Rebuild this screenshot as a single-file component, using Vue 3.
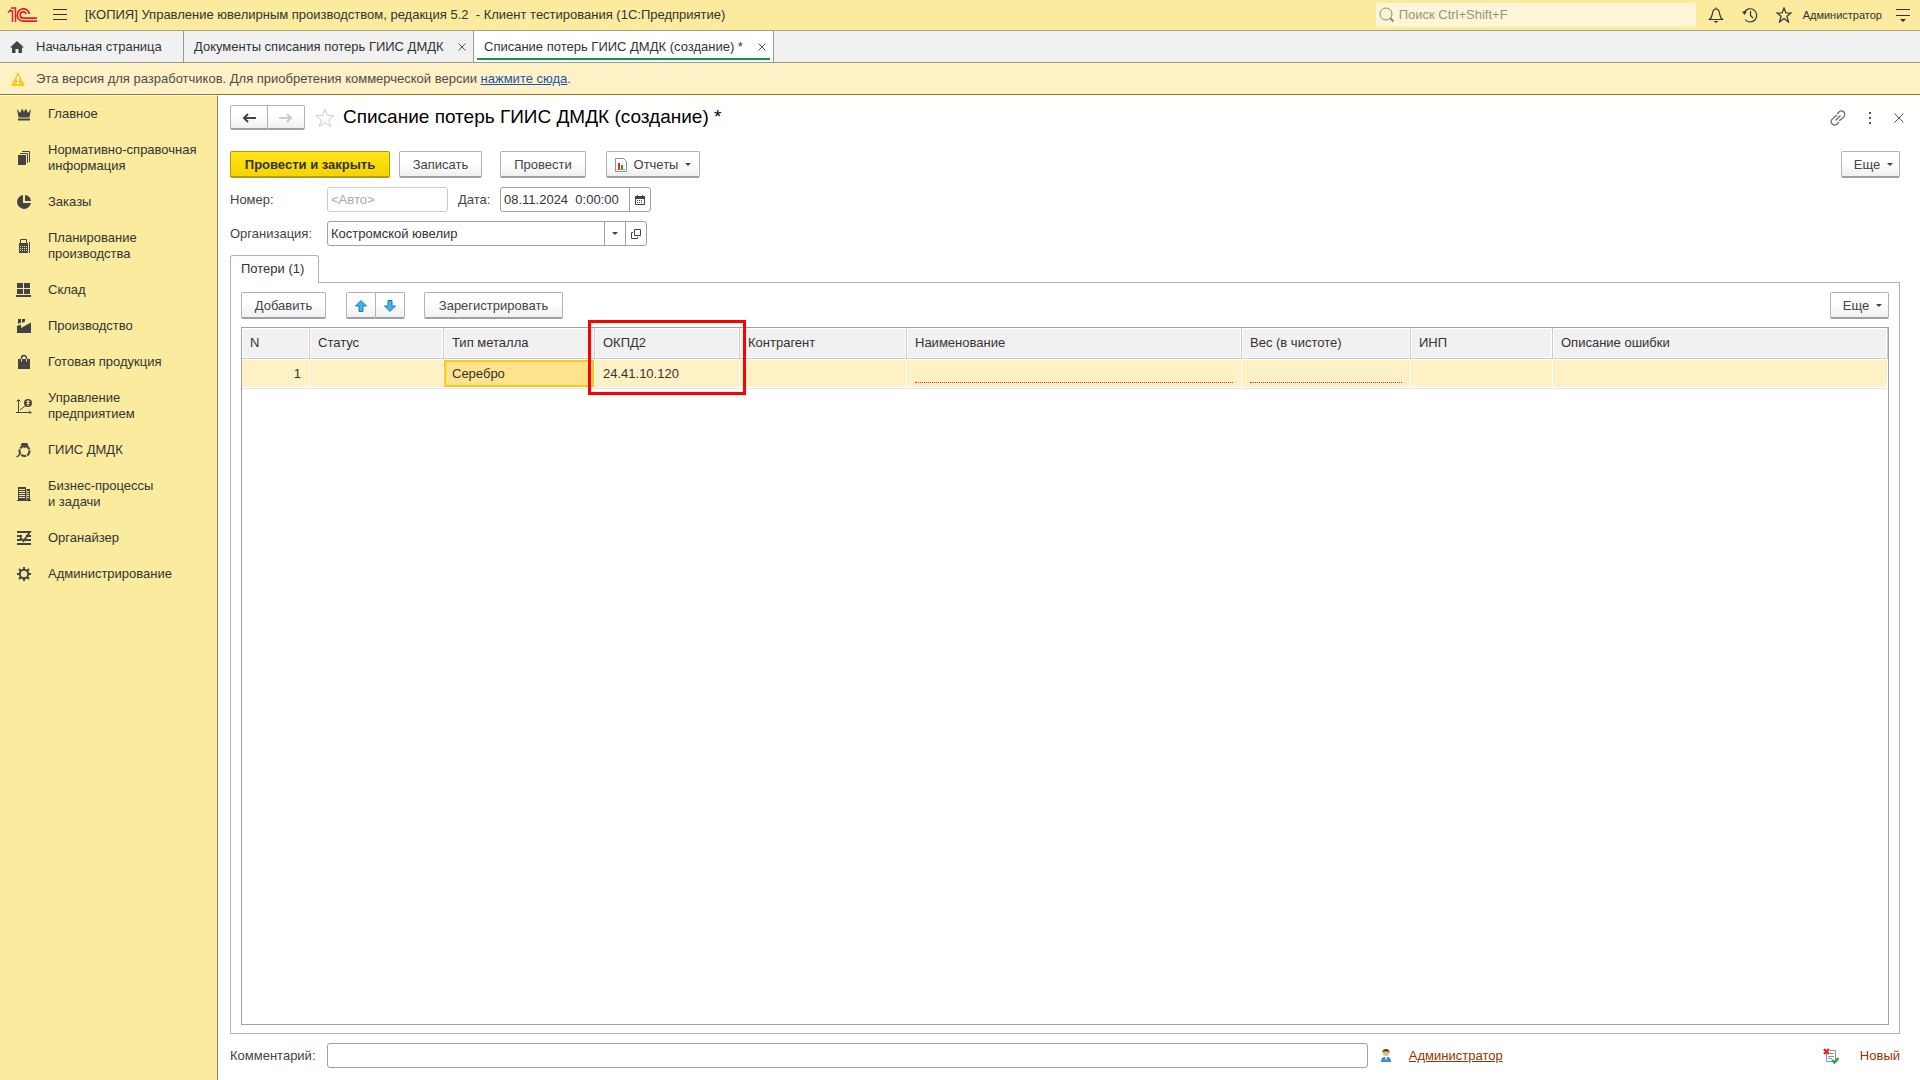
<script setup>
import { ref } from 'vue'

const menu = [
  { icon: 'crown', lines: ['Главное'] },
  { icon: 'docs', lines: ['Нормативно-справочная', 'информация'] },
  { icon: 'pie', lines: ['Заказы'] },
  { icon: 'calc', lines: ['Планирование', 'производства'] },
  { icon: 'stock', lines: ['Склад'] },
  { icon: 'factory', lines: ['Производство'] },
  { icon: 'bag', lines: ['Готовая продукция'] },
  { icon: 'chart', lines: ['Управление', 'предприятием'] },
  { icon: 'ring', lines: ['ГИИС ДМДК'] },
  { icon: 'building', lines: ['Бизнес-процессы', 'и задачи'] },
  { icon: 'organizer', lines: ['Органайзер'] },
  { icon: 'gear', lines: ['Администрирование'] },
]

const columns = [
  { key: 'n', title: 'N' },
  { key: 'status', title: 'Статус' },
  { key: 'metal', title: 'Тип металла' },
  { key: 'okpd', title: 'ОКПД2' },
  { key: 'partner', title: 'Контрагент' },
  { key: 'name', title: 'Наименование', required: true },
  { key: 'weight', title: 'Вес (в чистоте)', required: true },
  { key: 'inp', title: 'ИНП' },
  { key: 'error', title: 'Описание ошибки' },
]

const rows = [{ n: '1', metal: 'Серебро', okpd: '24.41.10.120' }]

const appTitle = '[КОПИЯ] Управление ювелирным производством, редакция 5.2  - Клиент тестирования (1С:Предприятие)'
const date = ref('08.11.2024  0:00:00')
const organization = ref('Костромской ювелир')
const comment = ref('')
</script>

<template>
  <div class="app">
    <header class="topbar">
      <svg class="logo" width="30" height="16" viewBox="0 0 30 16" fill="none" stroke="#e01f26" stroke-width="2">
        <path d="M0 5.500L3 2.500M2 4h2.500v11M3 1h4.500v14" stroke-width="1.500" />
        <path d="M21.500 7A6.200 6.200 0 1 0 15 14.200H29" stroke-width="1.700" />
        <path d="M18.400 7A3.200 3.200 0 1 0 15 11.200H29" stroke-width="1.700" />
      </svg>
      <button class="icon-btn burger" aria-label="Меню">
        <svg width="14" height="12" viewBox="0 0 14 12" stroke="#333" fill="none"><path d="M0 .5h14M0 5.500h14M0 10.500h14" /></svg>
      </button>
      <span class="app-title">{{ appTitle }}</span>
      <label class="search">
        <svg width="16" height="16" viewBox="0 0 16 16" fill="none" stroke="#8f8a68"><circle cx="7" cy="7" r="6" /><path d="M11 11l3.500 3.500" stroke-width="2" /></svg>
        <input type="search" placeholder="Поиск Ctrl+Shift+F" aria-label="Поиск" />
      </label>
      <button class="icon-btn" aria-label="Уведомления">
        <svg width="16" height="16" viewBox="0 0 16 16" fill="none" stroke="#333" stroke-width="1.200"><path d="M8 .5v1.500M1.500 12.500c2.500-2 2.500-3.500 3-6.500C5 3.500 6 2 8 2s3 1.500 3.500 4c.5 3 .5 4.500 3 6.500z" /><path d="M5.500 14h5L8 16z" fill="#333" stroke="none" /></svg>
      </button>
      <button class="icon-btn" aria-label="История">
        <svg width="16" height="16" viewBox="0 0 16 16" fill="none" stroke="#333" stroke-width="1.200"><path d="M2 6A6.600 6.600 0 1 1 3 12.500M8.500 4v4.500l2.500 2.500" /><path d="M0 4.500h5L2.500 8z" fill="#333" stroke="none" /></svg>
      </button>
      <button class="icon-btn" aria-label="Избранное">
        <svg width="16" height="16" viewBox="0 0 16 16" fill="none" stroke="#333" stroke-width="1.200"><path d="M8 1l1.900 5H15l-4.100 3.200L12.500 15 8 11.600 3.500 15l1.600-5.800L1 6h5.100z" /></svg>
      </button>
      <span class="user">Администратор</span>
      <button class="icon-btn" aria-label="Настройки">
        <svg width="14" height="14" viewBox="0 0 14 14" stroke="#333" fill="none"><path d="M0 1.500h14M0 7.500h14" /><path d="M4 11h6l-3 3z" fill="#333" stroke="none" /></svg>
      </button>
    </header>

    <nav class="tabs">
      <a href="#" class="tab home">
        <svg width="14" height="12" viewBox="0 0 14 12"><path d="M7 0L0 6.500h2V12h3.500V8h3v4H12V6.500h2z" fill="#444" /></svg>
        Начальная страница
      </a>
      <a href="#" class="tab list">
        Документы списания потерь ГИИС ДМДК
        <svg width="8" height="8" viewBox="0 0 8 8" stroke="#555" fill="none"><path d="M.5 .5l7 7M7.500 .5l-7 7" /></svg>
      </a>
      <a href="#" class="tab active">
        Списание потерь ГИИС ДМДК (создание) *
        <svg width="8" height="8" viewBox="0 0 8 8" stroke="#555" fill="none"><path d="M.5 .5l7 7M7.500 .5l-7 7" /></svg>
      </a>
    </nav>

    <div class="notice">
      <svg width="14" height="14" viewBox="0 0 14 14"><path d="M7 0l7 14H0z" fill="#fcca1e" /><path d="M6 4h2v5H6zM6 10h2v2H6z" fill="#fff" /></svg>
      <span>Эта версия для разработчиков. Для приобретения коммерческой версии <a href="#">нажмите сюда</a>.</span>
    </div>

    <div class="body">
      <aside class="sidebar">
        <a v-for="m in menu" :key="m.icon" href="#" class="menu-item">
          <svg width="16" height="16" viewBox="0 0 16 16" fill="#444">
            <path v-if="m.icon === 'crown'" d="M1 3l3 4 2-4h.5L8 6l1.500-3h.5l2 4 3-4-1.500 8.500h-11zM2 12.500h12v2H2z" />
            <template v-else-if="m.icon === 'docs'"><path d="M2 5h8v10H2z" /><path d="M4 3.500h7.500V13M6 1.500h7.500V12" fill="none" stroke="#444" /></template>
            <path v-else-if="m.icon === 'pie'" d="M7 1a7 7 0 1 0 8 8H7zM9 1v6h6c0-3-3-6-6-6z" />
            <template v-else-if="m.icon === 'calc'"><path d="M3 6h9v9H3z" /><path d="M4.500 6V1.500h6V6M13.500 4v11M3 5.500h9" fill="none" stroke="#444" /><path d="M4 8.500h7M4 10.500h7M4 12.500h7" stroke="#faeb9e" stroke-dasharray="1 1" /></template>
            <path v-else-if="m.icon === 'stock'" d="M1 1h6v5H1zM8 1h6v5H8zM1 7h6v5H1zM8 7h6v5H8zM0 13h15v2H0z" />
            <path v-else-if="m.icon === 'factory'" d="M1 15V8l4-1.500V10l10-5.500V15zM2 1h3v3.500L2 6zM6 1h3v2.500L6 5z" />
            <template v-else-if="m.icon === 'bag'"><path d="M2 5h12v10H2z" /><path d="M5.500 5V4a2.500 2.500 0 0 1 5 0v1" fill="none" stroke="#444" stroke-width="1.500" /><path d="M5.500 5v2.500M10.500 5v2.500" stroke="#faeb9e" /></template>
            <template v-else-if="m.icon === 'chart'"><path d="M2.500 15V2M0 14.500h15M.5 3.500l2-2 2 2M13 12.500l2 2-2 2M4 12l5-4" fill="none" stroke="#444" /><circle cx="12" cy="5" r="4" /><path d="M10.500 3.500h3M10.500 5.500h3M12 2v6" stroke="#faeb9e" fill="none" /></template>
            <template v-else-if="m.icon === 'ring'"><circle cx="8.500" cy="9" r="5" fill="none" stroke="#444" stroke-width="2" stroke-dasharray="5 1" /><path d="M6 1h5l1.500 2-4 3-4-3zM0 15l4-4 1 1-3.500 3.500z" /></template>
            <template v-else-if="m.icon === 'building'"><path d="M2 1h8v14H2zM10.500 3H14v12h-3.500z" /><path d="M3 3.500h6M3 5.500h6M3 7.500h6M3 9.500h6M3 11.500h6M11 5.500h2M11 7.500h2M11 9.500h2M11 11.500h2" stroke="#faeb9e" /><path d="M1 14h14v1H1z" /></template>
            <path v-else-if="m.icon === 'organizer'" d="M1 2h13L7.500 11 4 7.500M1 6h5M10 6h5M1 10h4M9 10h6M1 14h14" fill="none" stroke="#444" stroke-width="1.800" />
            <template v-else><circle cx="8" cy="8" r="4.200" fill="none" stroke="#444" stroke-width="2" /><path d="M8 1v3M8 12v3M1 8h3M12 8h3M3 3l2 2M11 11l2 2M3 13l2-2M11 5l2-2" stroke="#444" stroke-width="2" /></template>
          </svg>
          <span><template v-for="(l, i) in m.lines" :key="l"><br v-if="i" />{{ l }}</template></span>
        </a>
      </aside>

      <main class="content">
        <div class="title-row">
          <div class="group nav-group">
            <button class="btn" aria-label="Назад"><svg width="14" height="10" viewBox="0 0 14 10" fill="none" stroke="#444" stroke-width="2"><path d="M14 5H2M6 1L2 5l4 4" /></svg></button>
            <button class="btn" aria-label="Вперед"><svg width="14" height="10" viewBox="0 0 14 10" fill="none" stroke="#ccc" stroke-width="2"><path d="M0 5h12M8 1l4 4-4 4" /></svg></button>
          </div>
          <svg class="fav" width="20" height="20" viewBox="0 0 20 20" fill="none" stroke="#ccc"><path d="M10 1l2.400 6.600H19l-5.300 4.200 2 6.700L10 14.500l-5.700 4 2-6.700L1 7.600h6.600z" /></svg>
          <h1>Списание потерь ГИИС ДМДК (создание) *</h1>
          <div class="window-tools">
            <button class="icon-btn" aria-label="Ссылка"><svg width="16" height="16" viewBox="0 0 16 16" fill="none" stroke="#666" stroke-width="1.200"><path d="M7 4l2-2a3.200 3.200 0 0 1 4.800 4.800L11 9.500a3 3 0 0 1-2 .8M9 12l-2 2a3.200 3.200 0 0 1-4.800-4.800L5 6.500a3 3 0 0 1 2-.8M5.500 10.500l5-5" /></svg></button>
            <button class="icon-btn" aria-label="Меню формы"><svg width="16" height="12" viewBox="0 0 16 12" fill="#555"><path d="M7 0h2v2H7zM7 5h2v2H7zM7 10h2v2H7z" /></svg></button>
            <button class="icon-btn" aria-label="Закрыть"><svg width="10" height="10" viewBox="0 0 10 10" fill="none" stroke="#555"><path d="M.5 .5l9 9M9.500 .5l-9 9" /></svg></button>
          </div>
        </div>

        <div class="commands">
          <button class="btn primary">Провести и закрыть</button>
          <button class="btn save">Записать</button>
          <button class="btn post">Провести</button>
          <button class="btn reports">
            <svg width="12" height="14" viewBox="0 0 12 14"><path d="M.5 .5h8l3 3v10H.5z" fill="#fff" stroke="#8195a5" /><path d="M3 5h2v6H3z" fill="#e22" /><path d="M6 7h2v4H6z" fill="#390" /><path d="M2 11.500h8" stroke="#8195a5" /></svg>
            Отчеты <i class="caret"></i>
          </button>
          <button class="btn more">Еще <i class="caret"></i></button>
        </div>

        <div class="field-row">
          <label class="caption" for="number">Номер:</label>
          <input id="number" class="box number" placeholder="&lt;Авто&gt;" disabled />
          <label class="date-label" for="date">Дата:</label>
          <div class="box combo date">
            <input id="date" v-model="date" />
            <button aria-label="Выбрать дату"><svg width="10" height="10" viewBox="0 0 10 10"><path d="M.5 2v7.500h9V2" fill="none" stroke="#444" /><path d="M0 1h10v3H0zM2 0h1v1H2zM7 0h1v1H7z" fill="#444" /><path d="M2 5.500h6M2 7.500h6" stroke="#444" stroke-dasharray="1 1" /></svg></button>
          </div>
        </div>
        <div class="field-row">
          <label class="caption" for="org">Организация:</label>
          <div class="box combo org">
            <input id="org" v-model="organization" />
            <button aria-label="Выбрать"><i class="caret"></i></button>
            <button aria-label="Открыть"><svg width="10" height="10" viewBox="0 0 10 10" fill="none" stroke="#444"><path d="M3.500 .5h6v6h-6zM2 3.500H.5v6h6V8" /></svg></button>
          </div>
        </div>

        <section class="panel-area">
          <button class="page-tab">Потери (1)</button>
          <div class="panel">
            <div class="table-tools">
              <button class="btn add">Добавить</button>
              <div class="group move-group">
                <button class="btn" aria-label="Вверх"><svg width="12" height="12" viewBox="0 0 12 12" fill="#41b1ee" stroke="#267baf"><path d="M6 .5l5.500 5.500H8v5.500H4V6H.5z" /></svg></button>
                <button class="btn" aria-label="Вниз"><svg width="12" height="12" viewBox="0 0 12 12" fill="#41b1ee" stroke="#267baf"><path d="M6 11.500L.5 6H4V.5h4V6h3.500z" /></svg></button>
              </div>
              <button class="btn register">Зарегистрировать</button>
              <button class="btn more">Еще <i class="caret"></i></button>
            </div>
            <div class="grid">
              <table>
                <colgroup><col v-for="c in columns" :key="c.key" :class="'col-' + c.key" /></colgroup>
                <thead>
                  <tr><th v-for="c in columns" :key="c.key">{{ c.title }}</th></tr>
                </thead>
                <tbody>
                  <tr v-for="r in rows" :key="r.n">
                    <td v-for="c in columns" :key="c.key" :class="{ num: c.key === 'n', current: c.key === 'metal' }">
                      <div v-if="c.required" class="required"></div>
                      <template v-else>{{ r[c.key] }}</template>
                    </td>
                  </tr>
                </tbody>
              </table>
              <div class="highlight"></div>
            </div>
          </div>
        </section>

        <footer class="footer">
          <label class="caption" for="comment">Комментарий:</label>
          <input id="comment" v-model="comment" class="box comment" />
          <svg class="person" width="10" height="14" viewBox="0 0 10 14"><path d="M0 13c0-3 1-4.500 3-5h4c2 .5 3 2 3 5z" fill="#3b8fc9" /><path d="M4 8h2l-1 4z" fill="#fff" /><circle cx="5" cy="4" r="3" fill="#f2b66d" /><path d="M1.500 4C1 1 3 0 5 0s4 1 3.500 4L7.500 2.500h-5z" fill="#444" /></svg>
          <a href="#" class="author">Администратор</a>
          <div class="state">
            <svg width="16" height="16" viewBox="0 0 16 16" fill="none"><path d="M3.500 4v9.500h9V2.500H7" stroke="#7e93a8" /><path d="M7 5.500h4M5 8.500h6M5 10.500h4" stroke="#7e93a8" /><path d="M1 1l5 5M6 1L1 6" stroke="#dd2b2b" stroke-width="2.400" /><path d="M9 12l2.500 2.500L15.500 10" stroke="#22a83a" stroke-width="2.400" /></svg>
            <span>Новый</span>
          </div>
        </footer>
      </main>
    </div>
  </div>
</template>

<style>
body {
  margin: 0;
}
</style>

<style scoped>
.app {
  display: flex;
  flex-direction: column;
  min-height: 100vh;
  background: #fff;
  color: #333;
  font: 13px/16px "Liberation Sans", Arial, sans-serif;
}
.app *,
.app {
  box-sizing: border-box;
}
svg {
  display: block;
  flex: none;
}
button,
input {
  font: inherit;
  color: inherit;
}
.icon-btn {
  display: flex;
  padding: 0;
  border: 0;
  background: none;
}

.topbar {
  display: flex;
  align-items: center;
  gap: 18px;
  height: 31px;
  padding: 0 10px 0 8px;
  background: #faeb9e;
  border-bottom: 1px solid #a9a276;
}
.burger {
  margin-left: -3px;
}
.app-title {
  flex: 1;
  white-space: pre;
}
.search {
  display: flex;
  align-items: center;
  gap: 4px;
  width: 320px;
  height: 24px;
  margin-right: -6px;
  padding-left: 3px;
  border-radius: 2px;
  background: #fdf6d6;
}
.search input {
  flex: 1;
  min-width: 0;
  padding: 0;
  border: 0;
  outline: 0;
  background: none;
}
.search input::placeholder {
  color: #98947c;
  opacity: 1;
}
.user {
  margin: 0 -4px 0 -7px;
  font-size: 11px;
}

.tabs {
  display: flex;
  height: 32px;
  background: #f1f1f1;
  border-bottom: 1px solid #999;
}
.tab {
  position: relative;
  display: flex;
  align-items: center;
  justify-content: space-between;
  gap: 8px;
  padding: 0 7px 0 10px;
  border-right: 1px solid #999;
  color: #333;
  text-decoration: none;
}
.home {
  justify-content: flex-start;
  gap: 12px;
  min-width: 184px;
}
.list {
  min-width: 290px;
}
.active {
  min-width: 300px;
  background: #fff;
}
.active::after {
  content: "";
  position: absolute;
  right: 3px;
  bottom: 2px;
  left: 3px;
  height: 2px;
  background: #0b9a4d;
}

.notice {
  display: flex;
  align-items: center;
  gap: 11px;
  height: 32px;
  padding-left: 11px;
  background: #fef1c5;
  border-bottom: 1px solid #937b1f;
  color: #4d4d4d;
}
.notice a {
  color: #1a56b0;
}

.body {
  display: flex;
  flex: 1;
}
.sidebar {
  width: 218px;
  flex: none;
  background: #faeb9e;
  border-top: 1px solid #fff;
  border-right: 1px solid #8c8668;
}
.menu-item {
  display: flex;
  align-items: center;
  gap: 16px;
  padding: 10px 0 10px 16px;
  color: #333;
  text-decoration: none;
}

.content {
  display: flex;
  flex: 1;
  flex-direction: column;
  min-width: 0;
  padding: 10px 20px 12px 12px;
  color: #444;
}
.title-row {
  display: flex;
  align-items: center;
  height: 25px;
  margin-bottom: 21px;
}
.fav {
  margin: 0 8px 0 10px;
}
h1 {
  margin: 0;
  padding-bottom: 2px;
  color: #000;
  font-size: 19px;
  font-weight: 400;
  line-height: 24px;
}
.window-tools {
  display: flex;
  align-items: center;
  gap: 16px;
  margin-left: auto;
  margin-right: -4px;
}

.btn {
  display: flex;
  align-items: center;
  justify-content: center;
  height: 27px;
  padding: 1px 0 0;
  border: 1px solid #b3b3b3;
  border-bottom: 2px solid #a0a0a0;
  border-radius: 2px;
  background: linear-gradient(#fff 40%, #f0f0f0);
  color: #444;
}
.group {
  display: flex;
}
.group .btn + .btn {
  margin-left: -1px;
  border-top-left-radius: 0;
  border-bottom-left-radius: 0;
}
.nav-group .btn {
  width: 38px;
  height: 25px;
}
.move-group .btn {
  width: 30px;
}
.caret {
  width: 0;
  border: 3px solid transparent;
  border-top-color: #444;
  border-bottom: 0;
}
.commands {
  display: flex;
  margin-bottom: 9px;
}
.primary {
  width: 160px;
  border-color: #b39b00;
  background: linear-gradient(#ffe61a, #f5d400);
  color: #333;
  font-weight: 700;
}
.save {
  width: 83px;
  margin-left: 9px;
}
.post {
  width: 86px;
  margin-left: 18px;
}
.reports {
  gap: 7px;
  width: 94px;
  margin-left: 20px;
}
.more {
  gap: 7px;
  width: 59px;
  padding-left: 6px;
  margin-left: auto;
}

.field-row {
  display: flex;
  align-items: center;
  margin-bottom: 9px;
}
.caption {
  width: 97px;
  flex: none;
}
.box {
  height: 25px;
  border: 1px solid #a0a0a0;
  border-radius: 3px;
  background: #fff;
}
.number {
  width: 121px;
  padding: 0 3px;
  border-color: #ccc;
}
.number::placeholder {
  color: #aaa;
  opacity: 1;
}
.date-label {
  width: 42px;
  margin-left: 10px;
}
.combo {
  display: flex;
}
.combo input {
  flex: 1;
  min-width: 0;
  padding: 0 3px;
  border: 0;
  outline: 0;
  background: none;
  color: #333;
}
.combo button {
  display: flex;
  align-items: center;
  justify-content: center;
  width: 21px;
  padding: 0;
  border: 0;
  border-left: 1px solid #a0a0a0;
  background: none;
}
.date {
  width: 151px;
}
.org {
  width: 320px;
}

.panel-area {
  display: flex;
  flex: 1;
  flex-direction: column;
}
.page-tab {
  position: relative;
  align-self: flex-start;
  width: 89px;
  height: 28px;
  margin-bottom: -1px;
  padding: 0 0 2px 10px;
  border: 1px solid #b3b3b3;
  border-bottom: 0;
  border-radius: 3px 3px 0 0;
  background: #fff;
  color: #333;
  text-align: left;
}
.panel {
  display: flex;
  flex: 1;
  flex-direction: column;
  padding: 9px 10px 8px;
  border: 1px solid #b3b3b3;
}
.table-tools {
  display: flex;
  margin-bottom: 8px;
}
.add {
  width: 85px;
  margin-right: 20px;
}
.register {
  width: 139px;
  margin-left: 19px;
}
.grid {
  position: relative;
  flex: 1;
  border: 1px solid #a0a0a0;
}
table {
  width: 100%;
  border-collapse: separate;
  border-spacing: 0;
  table-layout: fixed;
  color: #333;
}
.col-n { width: 68px; }
.col-status { width: 134px; }
.col-metal { width: 151px; }
.col-okpd { width: 145px; }
.col-partner { width: 167px; }
.col-name { width: 335px; }
.col-weight { width: 169px; }
.col-inp { width: 142px; }
th {
  height: 31px;
  padding: 0 8px;
  border-right: 1px solid #ccc;
  border-bottom: 1px solid #ccc;
  background: #f1f1f1;
  box-shadow: inset 0 0 0 1px #fff;
  font-weight: 400;
  text-align: left;
}
td {
  height: 30px;
  padding: 0 8px;
  border-right: 1px solid #fff;
  border-bottom: 1px solid #e5e5e5;
  background: #fef1c5;
  box-shadow: inset 0 -1px #fff, inset 0 1px #fff;
}
.num {
  text-align: right;
}
.current {
  background: #fee38c;
  box-shadow: inset 0 -1px #fff, inset 0 1px #fff, inset 0 -3px #fcc81e, inset 0 3px #fcc81e, inset 0 0 0 2px #fcc81e;
}
.required {
  height: 18px;
  border-bottom: 1px dotted #f22;
}
.highlight {
  position: absolute;
  top: -8px;
  left: 346px;
  width: 158px;
  height: 75px;
  border: 3px solid #f00;
}

.footer {
  display: flex;
  align-items: center;
  margin-top: 9px;
}
.comment {
  flex: 1;
  min-width: 0;
  padding: 0 3px;
}
.person {
  margin: 0 18px 0 13px;
}
.author {
  width: 97px;
  color: #993300;
}
.state {
  display: flex;
  align-items: center;
  gap: 21px;
  margin-left: 317px;
  color: #993300;
}
</style>
